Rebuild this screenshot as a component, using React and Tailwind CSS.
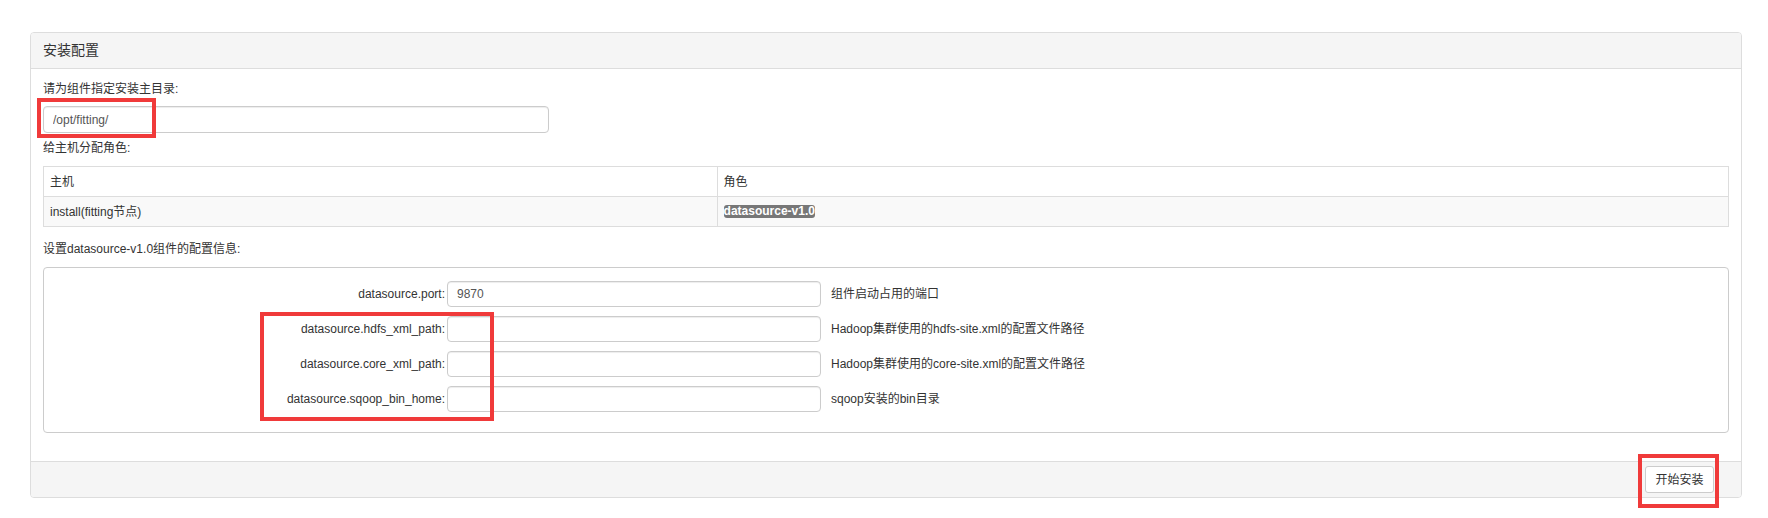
const fields = [
  { key: 'datasource.port', value: '9870', help: '组件启动占用的端口' },
  { key: 'datasource.hdfs_xml_path', value: '', help: 'Hadoop集群使用的hdfs-site.xml的配置文件路径' },
  { key: 'datasource.core_xml_path', value: '', help: 'Hadoop集群使用的core-site.xml的配置文件路径' },
  { key: 'datasource.sqoop_bin_home', value: '', help: 'sqoop安装的bin目录' },
];

const inputCls =
  'block rounded-[4px] border border-[#ccc] bg-white px-[9px] text-[12px] text-[#555] shadow-[inset_0_1px_1px_rgba(0,0,0,0.075)] outline-none';

const App = () => {
  return (
    <div className="relative min-h-[518px] bg-white pt-[32px] pl-[30px] pr-[26px] font-['Liberation_Sans','Noto_Sans_CJK_SC',sans-serif] text-[12px] text-[#333]">
      <div className="rounded-[4px] border border-[#ddd] bg-white">
        <div className="flex h-[36px] items-center rounded-t-[3px] border-b border-[#ddd] bg-[#f5f5f5] px-3 text-[14px]">
          安装配置
        </div>

        <div className="px-3 pt-[11px] pb-[28px]">
          <div className="leading-[18px]">请为组件指定安装主目录:</div>
          <input readOnly value="/opt/fitting/" className={`${inputCls} mt-[8px] h-[27px] w-[506px]`} />

          <div className="mt-[6px] leading-[18px]">给主机分配角色:</div>
          <div className="mt-[9px] border border-[#ddd]">
            <div className="grid h-[29px] grid-cols-[2fr_3fr]">
              <div className="flex items-center border-r border-[#ddd] px-[6px]">主机</div>
              <div className="flex items-center px-[6px]">角色</div>
            </div>
            <div className="grid h-[30px] grid-cols-[2fr_3fr] border-t border-[#ddd] bg-[#f9f9f9]">
              <div className="flex items-center border-r border-[#ddd] px-[6px]">install(fitting节点)</div>
              <div className="flex items-center px-[6px]">
                <span className="inline-block rounded-[3px] bg-[#777] text-[12px] leading-[13px] font-bold text-white">
                  datasource-v1.0
                </span>
              </div>
            </div>
          </div>

          <div className="mt-[13px] leading-[18px]">设置datasource-v1.0组件的配置信息:</div>
          <div className="mt-[9px] flex flex-col gap-[9px] rounded-[4px] border border-[#ccc] pt-[13px] pb-[20px]">
            {fields.map((f) => (
              <div key={f.key} className="flex h-[26px] items-center">
                <label className="w-[403px] pr-[2px] text-right">{f.key}:</label>
                <input readOnly value={f.value} className={`${inputCls} h-[26px] w-[374px]`} />
                <span className="ml-[10px]">{f.help}</span>
              </div>
            ))}
          </div>
        </div>

        <div className="flex h-[36px] items-center justify-end rounded-b-[3px] border-t border-[#ddd] bg-[#f5f5f5] pr-[27px]">
          <button className="h-[27px] w-[69px] rounded-[3px] border border-[#ccc] bg-white text-[12px] text-[#333]">
            开始安装
          </button>
        </div>
      </div>

      {/* red annotation boxes */}
      <div className="absolute left-[37px] top-[98px] h-[40px] w-[119px] border-4 border-[#f03a3a]" />
      <div className="absolute left-[260px] top-[312px] h-[109px] w-[234px] border-4 border-[#f03a3a]" />
      <div className="absolute left-[1638px] top-[454px] h-[54px] w-[81px] border-4 border-[#f03a3a]" />
    </div>
  );
};

export default App;
